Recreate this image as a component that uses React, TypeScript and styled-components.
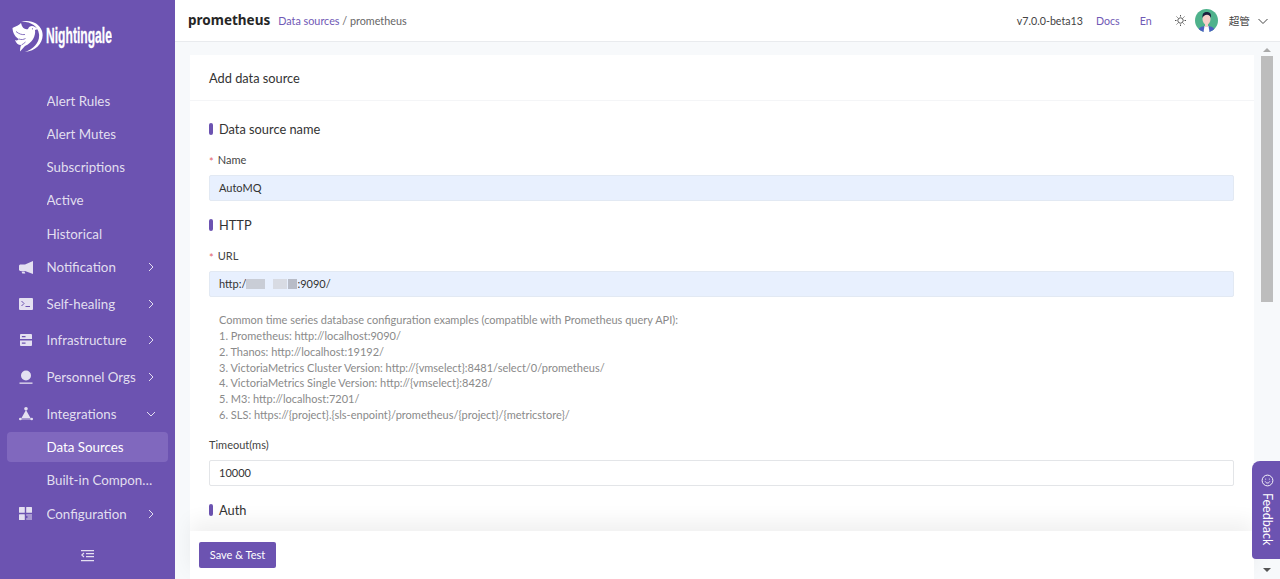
import styled, { createGlobalStyle } from 'styled-components'

const GlobalStyle = createGlobalStyle`
  html, body {
    margin: 0;
    height: 100%;
    overflow: hidden;
    font-family: Lato, "Noto Sans CJK SC", sans-serif;
    font-size: 11px;
    color: #333;
  }
  * {
    box-sizing: border-box;
  }
`

const Layout = styled.div`
  display: flex;
  height: 579px;
  overflow: hidden;
  position: relative;
`

const Sidebar = styled.aside`
  width: 175px;
  flex-shrink: 0;
  background: #6c53b1;
  display: flex;
  flex-direction: column;
  color: rgba(255, 255, 255, 0.82);
`

const Logo = styled.div`
  height: 85.5px;
  padding: 20px 0 0 12px;
  display: flex;
  align-items: flex-start;
  gap: 3px;
`

const LogoText = styled.span`
  font-family: "Liberation Sans", sans-serif;
  font-weight: 700;
  font-size: 22px;
  line-height: 32px;
  color: #fff;
  display: inline-block;
  -webkit-text-stroke: 0.3px #fff;
  transform: scaleX(0.55);
  transform-origin: left center;
  white-space: nowrap;
`

const Menu = styled.nav`
  display: flex;
  flex-direction: column;
  padding: 0 7px;
`

const MenuRow = styled.div<{ $active?: boolean; $leaf: boolean; $gap: number }>`
  height: 30px;
  margin-top: ${(p) => p.$gap}px;
  padding-right: ${(p) => (p.$leaf ? 15 : 0)}px;
  display: flex;
  align-items: center;
  border-radius: 4px;
  font-size: 13.33px;
  background: ${(p) => (p.$active ? '#8068be' : 'transparent')};
  color: ${(p) => (p.$active ? '#fff' : 'inherit')};
`

const MenuIcon = styled.span`
  width: 39.5px;
  padding-left: 12px;
  flex-shrink: 0;
  display: flex;
  align-items: center;
`

const MenuLabel = styled.span`
  flex: 1;
  min-width: 0;
  white-space: nowrap;
  overflow: hidden;
  text-overflow: ellipsis;
`

const Chevron = styled.span`
  width: 20px;
  margin-right: 7px;
  flex-shrink: 0;
  display: flex;
  justify-content: center;
`

const Collapse = styled.div`
  margin-top: 21.5px;
  display: flex;
  justify-content: center;
`

const Main = styled.div`
  flex: 1;
  min-width: 0;
  display: flex;
  flex-direction: column;
  background: #f7f9fb;
`

const Header = styled.header`
  height: 42px;
  flex-shrink: 0;
  background: #fff;
  border-bottom: 1px solid #e9ebee;
  display: flex;
  align-items: center;
  padding: 0 12px 0 13px;
`

const PageTitle = styled.h1`
  margin: 0 8px 2px 0;
  font-size: 13.5px;
  font-weight: 700;
  color: #262626;
  font-family: "Noto Sans", sans-serif;
`

const Crumbs = styled.div`
  font-size: 10.8px;
  color: #666;
  flex: 1;
`

const HeaderLink = styled.a`
  color: #7059b5;
  font-size: 10.67px;
`

const CrumbLink = styled(HeaderLink)`
  font-size: 10.8px;
`

const Version = styled.span`
  font-size: 10.67px;
  color: #444;
  margin-right: 13px;
`

const LangLink = styled(HeaderLink)`
  margin-left: 20px;
`

const ThemeIcon = styled.span`
  margin-left: 23px;
  display: flex;
`

const Avatar = styled.span`
  margin-left: 9px;
  display: flex;
`

const UserName = styled.span`
  margin-left: 11px;
  font-size: 10.67px;
  color: #444;
`

const UserCaret = styled.span`
  margin-left: 8px;
  display: flex;
`

const Body = styled.div`
  flex: 1;
  min-height: 0;
  padding: 13px 26px 0 15px;
  display: flex;
`

const Card = styled.section`
  flex: 1;
  min-width: 0;
  background: #fff;
  display: flex;
  flex-direction: column;
  position: relative;
`

const CardTitle = styled.div`
  height: 46px;
  flex-shrink: 0;
  border-bottom: 1px solid #f4f5f7;
  display: flex;
  align-items: center;
  padding-left: 19px;
  font-size: 12.8px;
  color: #333;
`

const Form = styled.form`
  flex: 1;
  min-height: 0;
  overflow: hidden;
  padding: 19px 20px 0 19px;
`

const SectionHeading = styled.div<{ $top?: number }>`
  margin-top: ${(p) => p.$top ?? 0}px;
  height: 17px;
  display: flex;
  align-items: center;
  gap: 6.5px;
  font-size: 12.8px;
  color: #333;
  &::before {
    content: '';
    width: 3.5px;
    height: 12px;
    border-radius: 2px;
    background: #6c53b1;
  }
`

const FieldLabel = styled.label<{ $top: number }>`
  display: block;
  margin-top: ${(p) => p.$top}px;
  height: 17px;
  line-height: 17px;
  font-size: 11px;
  color: #444;
`

const Required = styled.span`
  color: #e2626a;
  margin-right: 4px;
  font-size: 11px;
  vertical-align: -2px;
`

const TextInput = styled.div<{ $filled?: boolean }>`
  margin-top: 7px;
  height: 26px;
  display: flex;
  align-items: center;
  padding: 0 9px;
  font-size: 11px;
  color: #333;
  border: 1px solid ${(p) => (p.$filled ? '#e2e9f3' : '#e3e5e8')};
  border-radius: 2px;
  background: ${(p) => (p.$filled ? '#e8f0fe' : '#fff')};
`

const Blur = styled.span<{ $w: number; $mr?: number; $shade: string }>`
  display: inline-block;
  width: ${(p) => p.$w}px;
  height: 10px;
  margin-right: ${(p) => p.$mr ?? 0}px;
  background: ${(p) => p.$shade};
`

const Hints = styled.div`
  margin-top: 15.5px;
  padding-left: 10px;
  font-size: 11px;
  line-height: 15.85px;
  color: #8a8a8a;
`

const SaveBar = styled.div`
  height: 48px;
  flex-shrink: 0;
  background: #fff;
  padding: 11px 9px;
  box-shadow: 0 -10px 20px rgba(0, 0, 0, 0.06);
  position: relative;
`

const SaveButton = styled.button`
  width: 77px;
  height: 26px;
  border: 0;
  border-radius: 2px;
  background: #6c53b1;
  color: #fff;
  font-family: inherit;
  font-size: 11px;
  padding: 0 0 1px;
`

const Scrollbar = styled.div`
  position: absolute;
  top: 45px;
  right: 5px;
  bottom: 3px;
  width: 16px;
  display: flex;
  flex-direction: column;
  align-items: center;
`

const ScrollArrow = styled.span<{ $down?: boolean }>`
  height: 0;
  width: 0;
  margin: 3px 0 4px;
  border-left: 4px solid transparent;
  border-right: 4px solid transparent;
  ${(p) => (p.$down ? 'border-top: 4px solid #555;' : 'border-bottom: 4px solid #aaa;')}
`

const ScrollThumb = styled.span`
  width: 12px;
  height: 246px;
  background: #bdbdbd;
  margin-bottom: auto;
`

const FeedbackTab = styled.div`
  position: absolute;
  right: 0;
  top: 461px;
  width: 28px;
  height: 98px;
  background: #6c53b1;
  border-radius: 8px 0 0 4px;
  color: #fff;
  display: flex;
  flex-direction: column;
  align-items: center;
  padding: 13px 0 0 2px;
  gap: 6px;
`

const FeedbackText = styled.span`
  writing-mode: vertical-rl;
  font-size: 12.5px;
`

const BirdLogo = () => (
  <svg width="31" height="33" viewBox="0 0 31 33" fill="#fff">
    <path d="M8 2C17-1 27 2 30 11 33 21 25 31 13 32 22 29 28 22 27 14 26 6 18 1 8 2Z" />
    <path d="M.5 8C4 6.500 7 5 9 3 10 8 13 10 16 9 17 6 20 5 23 7L26 9 23 10C24 16 20 23 13 26L8 31.500C8 29 8.500 27 9 25 6 25 4 23 3 20 5 21 6 20 7 19 4 18 .5 13 .5 8Z" />
    <path d="M4 11.500C7 14 10 15 13 14.500M7 19C9.500 20 11.500 19.500 13.500 18.500M9.500 25C11 24 12.500 23 13.500 22" fill="none" stroke="#6c53b1" strokeWidth="0.8" />
    <circle cx="20.500" cy="8.800" r="0.600" fill="#6c53b1" />
  </svg>
)

const icons = {
  notification: (
    <svg width="14" height="13" viewBox="0 0 14 13" fill="currentColor">
      <path d="M14 0V13L6 10H1L0 9V4.500L1 3.500H6Z" />
      <path d="M2.500 10.500h3l.8 2h-3Z" />
    </svg>
  ),
  healing: (
    <svg width="14" height="12" viewBox="0 0 14 12">
      <rect width="14" height="12" rx="1" fill="currentColor" />
      <path d="M2.500 3 5 5.500 2.500 8" fill="none" stroke="#6c53b1" strokeWidth="1" />
      <path d="M6.500 8.500H11" stroke="#6c53b1" strokeWidth="1" />
    </svg>
  ),
  infrastructure: (
    <svg width="12" height="12" viewBox="0 0 13 13" fill="currentColor" fillRule="evenodd" style={{ marginLeft: 1 }}>
      <path d="M1 0h11a1 1 0 0 1 1 1v4.500H0V1a1 1 0 0 1 1-1ZM2 2.300v1.200h4V2.300Z" />
      <path d="M0 7h13v5a1 1 0 0 1-1 1H1a1 1 0 0 1-1-1ZM2 9.300v1.200h4V9.300Z" />
    </svg>
  ),
  personnel: (
    <svg width="14" height="14" viewBox="0 0 14 14" fill="currentColor">
      <circle cx="7" cy="5.500" r="5" />
      <rect x="0.500" y="12.500" width="13" height="1.300" />
    </svg>
  ),
  integrations: (
    <svg width="14" height="14" viewBox="0 0 14 14" fill="currentColor">
      <circle cx="7" cy="1.800" r="1.800" />
      <path d="M7 3 11.500 11h-9Z" />
      <circle cx="1.300" cy="12" r="1.300" />
      <circle cx="12.700" cy="12" r="1.300" />
      <path d="M2 11.500h10v.9H2Z" />
    </svg>
  ),
  configuration: (
    <svg width="13" height="13" viewBox="0 0 13 13" fill="currentColor">
      <rect width="5.800" height="5.800" rx=".5" />
      <rect x="7.200" width="5.800" height="5.800" rx=".5" />
      <rect y="7.200" width="5.800" height="5.800" rx=".5" />
      <path d="M7.200 7.500H13v1H7.200ZM8.500 9.500H13v1H8.500ZM7.200 11.500H13v1H7.200Z" />
    </svg>
  ),
}

type MenuItem = {
  label: string
  gap: number
  icon?: keyof typeof icons
  open?: boolean
  active?: boolean
}

const menuItems: MenuItem[] = [
  { label: 'Alert Rules', gap: 0 },
  { label: 'Alert Mutes', gap: 3.33 },
  { label: 'Subscriptions', gap: 3.33 },
  { label: 'Active', gap: 3.33 },
  { label: 'Historical', gap: 3.33 },
  { label: 'Notification', icon: 'notification', gap: 3.33 },
  { label: 'Self-healing', icon: 'healing', gap: 6.67 },
  { label: 'Infrastructure', icon: 'infrastructure', gap: 6.67 },
  { label: 'Personnel Orgs', icon: 'personnel', gap: 6.67 },
  { label: 'Integrations', icon: 'integrations', open: true, gap: 6.67 },
  { label: 'Data Sources', active: true, gap: 3.33 },
  { label: 'Built-in Components', gap: 3.33 },
  { label: 'Configuration', icon: 'configuration', gap: 3.33 },
]

const hintLines = [
  'Common time series database configuration examples (compatible with Prometheus query API):',
  '1. Prometheus: http://localhost:9090/',
  '2. Thanos: http://localhost:19192/',
  '3. VictoriaMetrics Cluster Version: http://{vmselect}:8481/select/0/prometheus/',
  '4. VictoriaMetrics Single Version: http://{vmselect}:8428/',
  '5. M3: http://localhost:7201/',
  '6. SLS: https://{project}.{sls-enpoint}/prometheus/{project}/{metricstore}/',
]

const Caret = ({ open }: { open?: boolean }) => (
  <svg width="10" height="10" viewBox="0 0 10 10" fill="none" stroke="currentColor" strokeWidth="1">
    <path d={open ? 'M1 3l4 4 4-4' : 'M3 1l4 4-4 4'} />
  </svg>
)

const App = () => (
  <>
    <GlobalStyle />
    <Layout>
      <Sidebar>
        <Logo>
          <BirdLogo />
          <LogoText>Nightingale</LogoText>
        </Logo>
        <Menu>
          {menuItems.map((item) => (
            <MenuRow key={item.label} $active={item.active} $leaf={!item.icon} $gap={item.gap}>
              <MenuIcon>{item.icon && icons[item.icon]}</MenuIcon>
              <MenuLabel>{item.label}</MenuLabel>
              {item.icon && (
                <Chevron>
                  <Caret open={item.open} />
                </Chevron>
              )}
            </MenuRow>
          ))}
        </Menu>
        <Collapse>
          <svg width="13" height="12" viewBox="0 0 13 12" stroke="currentColor" strokeWidth="1.200" fill="none">
            <path d="M0 .6h13M5 3.600h8M5 6.600h8M0 10.600h13" />
            <path d="M3 3 .8 5 3 7" />
          </svg>
        </Collapse>
      </Sidebar>
      <Main>
        <Header>
          <PageTitle>prometheus</PageTitle>
          <Crumbs>
            <CrumbLink>Data sources</CrumbLink> / prometheus
          </Crumbs>
          <Version>v7.0.0-beta13</Version>
          <HeaderLink>Docs</HeaderLink>
          <LangLink>En</LangLink>
          <ThemeIcon>
            <svg width="11" height="11" viewBox="0 0 11 11" fill="none" stroke="#444" strokeWidth="0.9">
              <circle cx="5.500" cy="5.500" r="2.700" />
              <path d="M5.500 0v1.500M5.500 9.500V11M0 5.500h1.500M9.500 5.500H11M1.600 1.600l1 1M8.400 8.400l1 1M1.600 9.400l1-1M8.400 2.600l1-1" />
            </svg>
          </ThemeIcon>
          <Avatar>
            <svg width="23" height="23" viewBox="0 0 23 23">
              <clipPath id="avatar-clip">
                <circle cx="11.500" cy="11.500" r="11.500" />
              </clipPath>
              <g clipPath="url(#avatar-clip)">
                <rect width="23" height="23" fill="#4fb28c" />
                <path d="M3 23c0-4 3-6 8.500-6S20 19 20 23Z" fill="#4a5fc0" />
                <path d="M8.500 23l1-6h4l1 6Z" fill="#fff" />
                <ellipse cx="11.500" cy="10" rx="4" ry="5.500" fill="#f7cfc9" />
                <rect x="10" y="14" width="3" height="4" fill="#f7cfc9" />
                <path d="M7.500 9C7 4.500 9 3 12 3c3 0 4.500 2 4 6-.5-2-2-3-4-3.200C10 6 8 7 7.500 9Z" fill="#1c1f3d" />
              </g>
            </svg>
          </Avatar>
          <UserName>超管</UserName>
          <UserCaret>
            <svg width="10" height="10" viewBox="0 0 10 10" fill="none" stroke="#444" strokeWidth="1">
              <path d="M.5 3l4.500 4.500L9.500 3" />
            </svg>
          </UserCaret>
        </Header>
        <Body>
          <Card>
            <CardTitle>Add data source</CardTitle>
            <Form>
              <SectionHeading>Data source name</SectionHeading>
              <FieldLabel $top={13.5}>
                <Required>*</Required>Name
              </FieldLabel>
              <TextInput $filled>AutoMQ</TextInput>
              <SectionHeading $top={15.5}>HTTP</SectionHeading>
              <FieldLabel $top={13.5}>
                <Required>*</Required>URL
              </FieldLabel>
              <TextInput $filled>
                http:/
                <Blur $w={19} $mr={8} $shade="#c9cdd6" />
                <Blur $w={14} $mr={1} $shade="#d8dbe3" />
                <Blur $w={9} $shade="#b8bcc7" />
                :9090/
              </TextInput>
              <Hints>
                {hintLines.map((line) => (
                  <div key={line}>{line}</div>
                ))}
              </Hints>
              <FieldLabel $top={13}>Timeout(ms)</FieldLabel>
              <TextInput>10000</TextInput>
              <SectionHeading $top={16}>Auth</SectionHeading>
            </Form>
            <SaveBar>
              <SaveButton type="button">Save &amp; Test</SaveButton>
            </SaveBar>
          </Card>
        </Body>
      </Main>
      <Scrollbar>
        <ScrollArrow />
        <ScrollThumb />
        <ScrollArrow $down />
      </Scrollbar>
      <FeedbackTab>
        <svg width="13" height="13" viewBox="0 0 14 14" fill="none" stroke="currentColor" strokeWidth="1">
          <circle cx="7" cy="7" r="5.800" />
          <path d="M4.500 8c.6 1.200 1.500 1.700 2.500 1.700S8.900 9.200 9.500 8" />
          <path d="M5 5v1M9 5v1" />
        </svg>
        <FeedbackText>Feedback</FeedbackText>
      </FeedbackTab>
    </Layout>
  </>
)

export default App
